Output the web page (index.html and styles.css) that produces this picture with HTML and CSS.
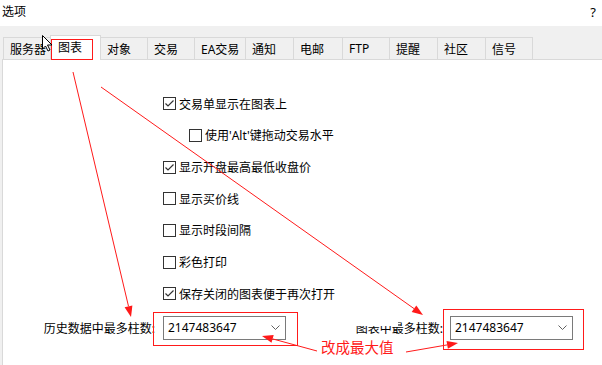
FILE: index.html
```html
<!DOCTYPE html>
<html lang="zh-CN">
<head>
    <meta charset="UTF-8">
    <title>选项</title>
    <link rel="stylesheet" href="styles.css">
</head>
<body>

<div class="titlebar">
    <span>选项</span>
    <span class="help">?</span>
</div>

<div class="dialog">
    <div class="tabs">
        <div class="tab w48">服务器</div>
        <div class="tab active w51">图表</div>
        <div class="tab w48">对象</div>
        <div class="tab w48">交易</div>
        <div class="tab w52">EA交易</div>
        <div class="tab w49">通知</div>
        <div class="tab w50">电邮</div>
        <div class="tab w48">FTP</div>
        <div class="tab w49">提醒</div>
        <div class="tab w49">社区</div>
        <div class="tab w48">信号</div>
    </div>

    <div class="panel">
        <div class="options">
            <div class="row">
                <span class="check on"><svg width="11" height="11" viewBox="0 0 11 11"><path d="M1.5 5.5 L4 8 L9.5 2.5" /></svg></span>
                <span>交易单显示在图表上</span>
            </div>
            <div class="row sub">
                <span class="check"></span>
                <span>使用'Alt'键拖动交易水平</span>
            </div>
            <div class="row">
                <span class="check on"><svg width="11" height="11" viewBox="0 0 11 11"><path d="M1.5 5.5 L4 8 L9.5 2.5" /></svg></span>
                <span>显示开盘最高最低收盘价</span>
            </div>
            <div class="row">
                <span class="check"></span>
                <span>显示买价线</span>
            </div>
            <div class="row">
                <span class="check"></span>
                <span>显示时段间隔</span>
            </div>
            <div class="row">
                <span class="check"></span>
                <span>彩色打印</span>
            </div>
            <div class="row">
                <span class="check on"><svg width="11" height="11" viewBox="0 0 11 11"><path d="M1.5 5.5 L4 8 L9.5 2.5" /></svg></span>
                <span>保存关闭的图表便于再次打开</span>
            </div>
        </div>

        <div class="limits">
            <div class="field">
                <label>历史数据中最多柱数:</label>
                <div class="combo">
                    <span>2147483647</span>
                    <svg width="9" height="5" viewBox="0 0 9 5"><path d="M0.5 0.5 L4.5 4.5 L8.5 0.5" /></svg>
                </div>
            </div>
            <div class="field second">
                <label>图表中最多柱数:</label>
                <div class="combo">
                    <span>2147483647</span>
                    <svg width="9" height="5" viewBox="0 0 9 5"><path d="M0.5 0.5 L4.5 4.5 L8.5 0.5" /></svg>
                </div>
            </div>
        </div>
    </div>
</div>

<!-- clipped label top, as in the capture -->
<div class="clip"></div>

<div class="note">改成最大值</div>

<svg class="marks" width="602" height="365" viewBox="0 0 602 365">
    <g class="red">
        <rect x="51.5" y="39.5" width="41" height="20" />
        <rect x="153.5" y="312.5" width="144" height="33" />
        <rect x="443.5" y="309.5" width="140" height="40" />
        <line x1="73" y1="72" x2="128.5" y2="306.3" />
        <line x1="101" y1="87" x2="414" y2="308.6" />
        <line x1="317" y1="351" x2="272.6" y2="338.9" />
        <line x1="406" y1="352" x2="447.2" y2="344.9" />
    </g>
    <g class="heads">
        <polygon points="131,317 124.6,307.2 132.4,305.4" />
        <polygon points="423,315 411.7,311.9 416.3,305.4" />
        <polygon points="262,336 273.7,335.0 271.5,342.8" />
        <polygon points="458,343 447.9,348.8 446.5,341.0" />
    </g>
    <polygon class="cursor" points="42.5,35.5 42.5,49 45.5,46 48,51 50,50 47.5,45 52,45" />
</svg>

</body>
</html>
```

FILE: styles.css
```css
body {
    margin: 0;
    width: 602px;
    height: 365px;
    overflow: hidden;
    background-color: #fff;
    font-family: "Noto Sans", "Noto Sans CJK SC", sans-serif;
    font-size: 12px;
    color: #000;
    position: relative;
}
.titlebar {
    height: 26px;
    box-sizing: border-box;
    padding: 4px 6px 0 2px;
    line-height: 16px;
    display: flex;
    justify-content: space-between;
}
.help {
    font-size: 13px;
}
.dialog {
    height: 339px;
    box-sizing: border-box;
    background-color: #f0f0f0;
    padding-top: 9px;
    display: flex;
    flex-direction: column;
}
.tabs {
    display: flex;
    align-items: flex-end;
    height: 25px;
    padding-left: 3px;
    margin-bottom: -1px;
}
.tab {
    box-sizing: border-box;
    height: 22px;
    margin-bottom: 1px;
    margin-left: -1px;
    padding-left: 6px;
    border: 1px solid #d9d9d9;
    border-bottom: none;
    background-color: #f0f0f0;
    display: flex;
    align-items: center;
    white-space: nowrap;
}
.tab:first-child {
    margin-left: 0;
}
.tab.active {
    height: 25px;
    margin-bottom: 0;
    padding-left: 7px;
    padding-bottom: 2px;
    background-color: #fff;
    position: relative;
    z-index: 1;
}
.w48 { width: 48px; }
.w49 { width: 49px; }
.w50 { width: 50px; }
.w51 { width: 51px; }
.w52 { width: 52px; }
.panel {
    flex: 1;
    margin-left: 2px;
    background-color: #fff;
    border-top: 1px solid #d9d9d9;
    border-left: 1px solid #d9d9d9;
}
.options {
    padding: 28px 0 0 160px;
}
.row {
    height: 31.67px;
    display: flex;
    align-items: center;
    gap: 3px;
}
.row.sub {
    margin-left: 26px;
}
.check {
    width: 13px;
    height: 13px;
    box-sizing: border-box;
    border: 1px solid #333;
    background-color: #fff;
    display: flex;
}
.check svg path {
    fill: none;
    stroke: #333;
    stroke-width: 1.2;
}
.limits {
    display: flex;
    margin-top: 6px;
    padding-left: 40px;
}
.field {
    display: flex;
    align-items: center;
}
.field.second {
    margin-left: 44px;
}
.field label {
    width: 120px;
    box-sizing: border-box;
    padding-right: 8px;
    text-align: right;
    white-space: nowrap;
}
.field.second label {
    padding-right: 7px;
}
.combo {
    width: 123px;
    height: 24px;
    box-sizing: border-box;
    border: 1px solid #7a7a7a;
    background-color: #fff;
    padding: 0 5px 0 4px;
    display: flex;
    align-items: center;
    justify-content: space-between;
}
.combo svg path {
    fill: none;
    stroke: #606060;
    stroke-width: 1;
}
.clip {
    position: absolute;
    left: 355px;
    top: 319px;
    width: 43px;
    height: 7px;
    background-color: #fff;
}
.note {
    position: absolute;
    left: 321px;
    top: 340px;
    font-size: 14.5px;
    line-height: 15px;
    color: #ff1a1a;
}
.marks {
    position: absolute;
    left: 0;
    top: 0;
    z-index: 2;
    pointer-events: none;
}
.red rect,
.red line {
    fill: none;
    stroke: #ff1a1a;
    stroke-width: 1;
}
.heads polygon {
    fill: #ff1a1a;
}
.cursor {
    fill: #fff;
    stroke: #000;
    stroke-width: 1;
    stroke-linejoin: miter;
}
```
